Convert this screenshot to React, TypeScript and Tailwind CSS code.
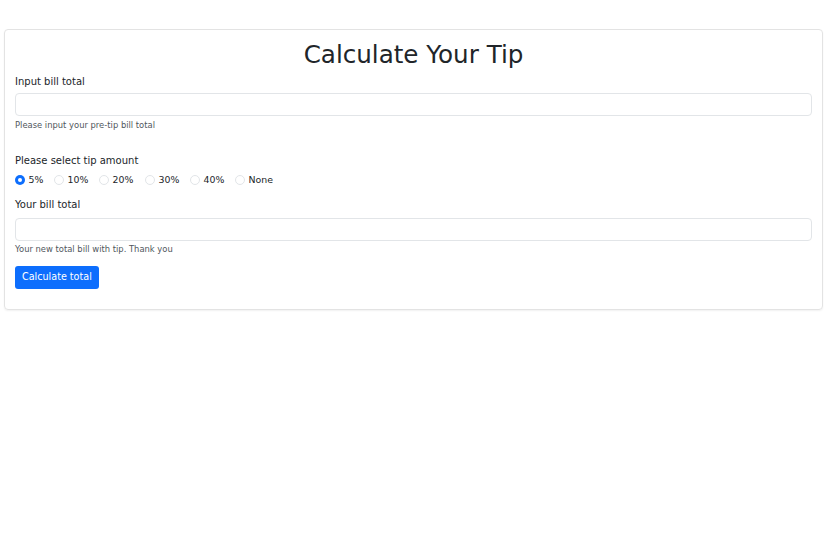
import { useState } from "react";

const tips = [
  { label: "5%", w: "w-[39px]" },
  { label: "10%", w: "w-[45px]" },
  { label: "20%", w: "w-[46px]" },
  { label: "30%", w: "w-[45px]" },
  { label: "40%", w: "w-[45px]" },
  { label: "None", w: "w-[45px]" },
];

export default function App() {
  const [tip, setTip] = useState<string>("5%");
  const [bill, setBill] = useState<string>("");
  const [total, setTotal] = useState<string>("");

  return (
    <div className="min-h-screen bg-white pt-[29px] pl-[4px] pr-[8px] font-['DejaVu_Sans',sans-serif] text-[#212529]">
      <div className="border border-[#e3e3e3] rounded-[4px] shadow-[0_1px_2px_rgba(0,0,0,0.06)] px-[10px] pt-[10px] pb-[20px]">
        <h1 className="text-center text-[24.6px] leading-[29px] font-normal mb-[5px]">
          Calculate Your Tip
        </h1>

        <label className="block text-[10px] leading-[15px] mb-[4px]">Input bill total</label>
        <input
          type="text"
          value={bill}
          onChange={(e) => setBill(e.target.value)}
          className="block w-full h-[23px] border border-[#e2e5e8] rounded-[4px] px-2 text-[10px] outline-none"
        />
        <div className="text-[8.4px] leading-[12px] mt-[3px] text-[#50565c]">
          Please input your pre-tip bill total
        </div>

        <div className="text-[10px] leading-[15px] mt-[22px]">Please select tip amount</div>
        <div className="flex items-center h-[15px] mt-[5px] text-[9.4px]">
          {tips.map((t) => (
            <label
              key={t.label}
              onClick={() => setTip(t.label)}
              className={`${t.w} flex items-center cursor-pointer`}
            >
              {tip === t.label ? (
                <span className="w-[10px] h-[10px] rounded-full bg-[#0d6efd] flex items-center justify-center">
                  <span className="w-[4px] h-[4px] rounded-full bg-white" />
                </span>
              ) : (
                <span className="w-[10px] h-[10px] rounded-full border border-[#e2e5e8]" />
              )}
              <span className="ml-[3.5px]">{t.label}</span>
            </label>
          ))}
        </div>

        <label className="block text-[10px] leading-[15px] mt-[9px] mb-[6px]">Your bill total</label>
        <input
          type="text"
          value={total}
          onChange={(e) => setTotal(e.target.value)}
          className="block w-full h-[23px] border border-[#e2e5e8] rounded-[4px] px-2 text-[10px] outline-none"
        />
        <div className="text-[8.4px] leading-[12px] mt-[2px] text-[#50565c]">
          Your new total bill with tip. Thank you
        </div>

        <button
          type="button"
          className="mt-[11px] h-[23px] px-[7px] rounded-[3px] bg-[#0d6efd] text-white text-[9.6px]"
        >
          Calculate total
        </button>
      </div>
    </div>
  );
}
